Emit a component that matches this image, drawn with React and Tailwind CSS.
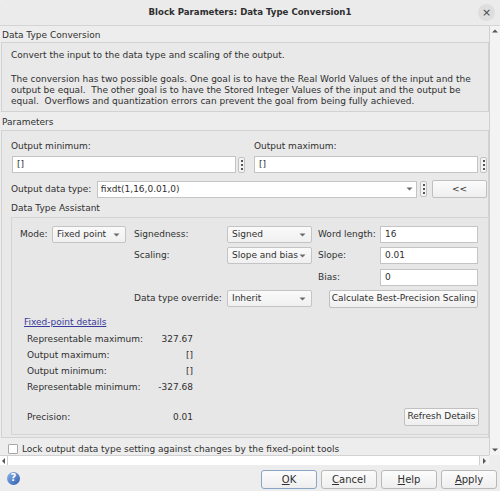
import React from "react";

const F = { fontFamily: '"DejaVu Sans", "Liberation Sans", sans-serif' };

function Dots() {
  return (
    <div className="w-[7px] h-[16px] border border-[#c2c2c2] rounded-[2px] bg-[#f4f4f4] flex flex-col items-center justify-center gap-[2px]">
      <div className="w-[2px] h-[2px] bg-[#555]" />
      <div className="w-[2px] h-[2px] bg-[#555]" />
      <div className="w-[2px] h-[2px] bg-[#555]" />
    </div>
  );
}

function Arrow() {
  return (
    <svg width="7" height="4" viewBox="0 0 7 4" className="shrink-0">
      <path d="M0.5 0.5 L6.5 0.5 L3.5 3.5 Z" fill="#6a6a6a" />
    </svg>
  );
}

function Select({ w, children }) {
  return (
    <div className={`${w} h-[17px] border border-[#c4c4c4] rounded-[2px] bg-gradient-to-b from-[#fafafa] to-[#f0f0f0] flex items-center justify-between pl-[4px] pr-[5px] shrink-0`}>
      <span className="whitespace-nowrap">{children}</span>
      <Arrow />
    </div>
  );
}

function Input({ w, children }) {
  return (
    <div className={`${w} h-[17px] border border-[#c4c4c4] bg-white flex items-center pl-[4px] shrink-0`}>
      {children}
    </div>
  );
}

function Btn({ className = "", children }) {
  return (
    <div className={`h-[18px] border border-[#c0c0c0] rounded-[2px] bg-gradient-to-b from-[#fbfbfb] to-[#efefef] flex items-center justify-center whitespace-nowrap ${className}`}>
      {children}
    </div>
  );
}

function FootBtn({ children, ok }) {
  return (
    <div className={`w-[56px] h-[19px] border ${ok ? "border-[#8aa4c6]" : "border-[#b9b9b9]"} rounded-[3px] bg-gradient-to-b from-[#fcfcfc] to-[#eeeeee] flex items-center justify-center text-[10px]`}>
      {children}
    </div>
  );
}

export default function App() {
  return (
    <div style={F} className="w-[500px] h-[491px] bg-[#ededed] text-[#303030] text-[9px] leading-[11px] flex flex-col overflow-hidden">
      {/* title bar */}
      <div className="h-[26px] shrink-0 bg-[#ebebeb] border-b border-[#d4d4d4] rounded-t-[6px] flex items-center relative">
        <div className="flex-1 text-center font-bold text-[8.6px] text-[#2e2e2e]">Block Parameters: Data Type Conversion1</div>
        <div className="absolute right-[5px] top-[4px] w-[17px] h-[17px] rounded-full bg-[#dedede] flex items-center justify-center text-[11px] text-[#444]">×</div>
      </div>

      {/* middle */}
      <div className="flex h-[429px] shrink-0">
        <div className="w-[489px] shrink-0 overflow-hidden">
          <div className="h-[16px] pl-[2px] pt-[2px] flex items-center">Data Type Conversion</div>
          <div className="ml-[1px] h-[70px] border border-[#d2d2d2] bg-[#e9e9e9] pl-[9px] pt-[7px]">
            <p>Convert the input to the data type and scaling of the output.</p>
            <p className="mt-[13px]">
              The conversion has two possible goals. One goal is to have the Real World Values of the input and the<br />
              output be equal.&nbsp; The other goal is to have the Stored Integer Values of the input and the output be<br />
              equal.&nbsp; Overflows and quantization errors can prevent the goal from being fully achieved.
            </p>
          </div>
          <div className="h-[18px] pl-[2px] flex items-center pt-[2px]">Parameters</div>
          <div className="ml-[1px] h-[308px] border border-[#d2d2d2] bg-[#e9e9e9] pl-[9px] pr-[1px]">
            <div className="flex mt-[10px]">
              <div className="w-[243px]">
                <div className="h-[11px]">Output minimum:</div>
                <div className="flex items-center gap-[2px] mt-[4px] ml-[1px]">
                  <Input w="w-[224px]">[]</Input>
                  <Dots />
                </div>
              </div>
              <div>
                <div className="h-[11px]">Output maximum:</div>
                <div className="flex items-center gap-[2px] mt-[4px]">
                  <Input w="w-[224px]">[]</Input>
                  <Dots />
                </div>
              </div>
            </div>
            <div className="flex items-center mt-[7px] h-[18px]">
              <span className="w-[86px]">Output data type:</span>
              <div className="w-[321px] h-[17px] border border-[#c4c4c4] bg-white flex items-center justify-between pl-[3px] pr-[3px]">
                <span>fixdt(1,16,0.01,0)</span>
                <Arrow />
              </div>
              <div className="ml-[3px]"><Dots /></div>
              <Btn className="ml-[5px] w-[55px]">&lt;&lt;</Btn>
            </div>
            <div className="mt-[5px] h-[12px]">Data Type Assistant</div>
            <div className="mt-[2px] h-[218px] w-[478px] border border-[#d4d4d4] bg-[#e7e7e7] pl-[8px] pt-[8px]">
              <div className="flex items-center h-[17px]">
                <span className="w-[32px]">Mode:</span>
                <Select w="w-[74px]">Fixed point</Select>
                <span className="w-[93px] ml-[8px]">Signedness:</span>
                <Select w="w-[85px]">Signed</Select>
                <span className="w-[62px] ml-[6px]">Word length:</span>
                <Input w="w-[98px]">16</Input>
              </div>
              <div className="flex items-center h-[17px] mt-[4px]">
                <span className="w-[32px]" />
                <span className="w-[74px]" />
                <span className="w-[93px] ml-[8px]">Scaling:</span>
                <Select w="w-[85px]">Slope and bias</Select>
                <span className="w-[62px] ml-[6px]">Slope:</span>
                <Input w="w-[98px]">0.01</Input>
              </div>
              <div className="flex items-center h-[17px] mt-[5px]">
                <span className="w-[298px]" />
                <span className="w-[62px]">Bias:</span>
                <Input w="w-[98px]">0</Input>
              </div>
              <div className="flex items-center h-[17px] mt-[4px]">
                <span className="w-[32px]" />
                <span className="w-[74px]" />
                <span className="w-[93px] ml-[8px]">Data type override:</span>
                <Select w="w-[85px]">Inherit</Select>
                <Btn className="ml-[17px] w-[149px]">Calculate Best-Precision Scaling</Btn>
              </div>
              <div className="mt-[10px] ml-[4px] h-[11px] text-[#3a3a9a] underline">Fixed-point details</div>
              <div className="ml-[7px] mt-[3px] flex flex-col">
                {[
                  ["Representable maximum:", "327.67"],
                  ["Output maximum:", "[]"],
                  ["Output minimum:", "[]"],
                  ["Representable minimum:", "-327.68"],
                ].map(([a, b]) => (
                  <div key={a} className="flex h-[16px] items-center">
                    <span className="w-[122px]">{a}</span>
                    <span className="w-[44px] text-right">{b}</span>
                  </div>
                ))}
                <div className="flex h-[17px] items-center mt-[14px]">
                  <span className="w-[122px]">Precision:</span>
                  <span className="w-[44px] text-right">0.01</span>
                  <Btn className="ml-[211px] w-[75px] -mt-[2px]">Refresh Details</Btn>
                </div>
              </div>
            </div>
          </div>
          <div className="flex items-center mt-[5px] ml-[8px] h-[12px]">
            <div className="w-[10px] h-[10px] border border-[#a8a8a8] bg-white rounded-[1px]" />
            <span className="ml-[4px]">Lock output data type setting against changes by the fixed-point tools</span>
          </div>
        </div>
        {/* vertical scrollbar */}
        <div className="w-[11px] shrink-0 border-l border-[#cfcfcf] bg-[#f3f3f3] flex flex-col justify-between items-center py-[3px]">
          <svg width="6" height="4" viewBox="0 0 6 4"><path d="M0 3.5 L6 3.5 L3 0.5 Z" fill="#555" /></svg>
          <svg width="6" height="4" viewBox="0 0 6 4"><path d="M0 0.5 L6 0.5 L3 3.5 Z" fill="#555" /></svg>
        </div>
      </div>

      {/* horizontal scrollbar */}
      <div className="h-[10px] shrink-0 flex">
        <div className="w-[489px] bg-white border-t border-[#d2d2d2] flex items-center justify-between">
          <div className="w-[8px] h-full flex items-center justify-center border-r border-[#cfcfcf]">
            <svg width="3" height="6" viewBox="0 0 3 6"><path d="M3 0 L3 6 L0 3 Z" fill="#555" /></svg>
          </div>
          <div className="w-[10px] h-full flex items-center justify-center border-l border-[#cfcfcf] bg-[#f3f3f3]">
            <svg width="3" height="6" viewBox="0 0 3 6"><path d="M0 0 L0 6 L3 3 Z" fill="#555" /></svg>
          </div>
        </div>
        <div className="flex-1 bg-[#ededed]" />
      </div>

      {/* footer */}
      <div className="flex-1 flex items-center pl-[7px] pr-[3px]">
        <div className="w-[13px] h-[13px] rounded-full bg-gradient-to-br from-[#8eb3e8] to-[#2c5cb0] flex items-center justify-center text-white text-[10px] font-bold leading-none">?</div>
        <div className="flex-1" />
        <div className="flex gap-[4px] mt-[2px]">
          <FootBtn ok><span><u>O</u>K</span></FootBtn>
          <FootBtn><span><u>C</u>ancel</span></FootBtn>
          <FootBtn><span><u>H</u>elp</span></FootBtn>
          <FootBtn><span><u>A</u>pply</span></FootBtn>
        </div>
      </div>
    </div>
  );
}
